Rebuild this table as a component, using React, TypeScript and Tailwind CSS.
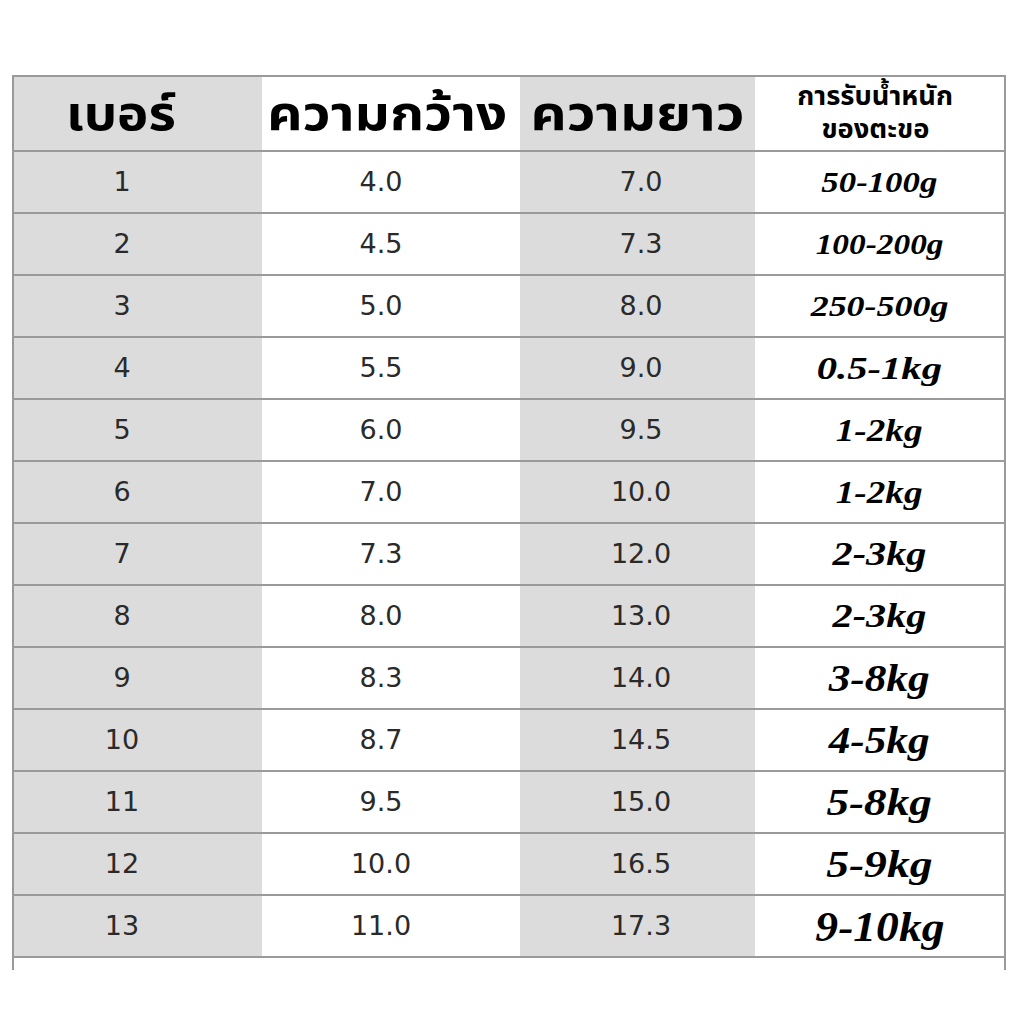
import React from 'react';

// size + horizontal stretch per row, the source face is wider than Times
const rows: { no: string; w: string; l: string; load: string; cls: string }[] = [
  { no: '1', w: '4.0', l: '7.0', load: '50-100g', cls: 'text-[29px] scale-x-[1.2]' },
  { no: '2', w: '4.5', l: '7.3', load: '100-200g', cls: 'text-[29px] scale-x-[1.15]' },
  { no: '3', w: '5.0', l: '8.0', load: '250-500g', cls: 'text-[29px] scale-x-[1.24]' },
  { no: '4', w: '5.5', l: '9.0', load: '0.5-1kg', cls: 'text-[32px] scale-x-[1.27]' },
  { no: '5', w: '6.0', l: '9.5', load: '1-2kg', cls: 'text-[31px] scale-x-[1.2]' },
  { no: '6', w: '7.0', l: '10.0', load: '1-2kg', cls: 'text-[31px] scale-x-[1.2]' },
  { no: '7', w: '7.3', l: '12.0', load: '2-3kg', cls: 'text-[33px] scale-x-[1.22]' },
  { no: '8', w: '8.0', l: '13.0', load: '2-3kg', cls: 'text-[33px] scale-x-[1.22]' },
  { no: '9', w: '8.3', l: '14.0', load: '3-8kg', cls: 'text-[37px] scale-x-[1.17]' },
  { no: '10', w: '8.7', l: '14.5', load: '4-5kg', cls: 'text-[37px] scale-x-[1.17]' },
  { no: '11', w: '9.5', l: '15.0', load: '5-8kg', cls: 'text-[37px] scale-x-[1.22]' },
  { no: '12', w: '10.0', l: '16.5', load: '5-9kg', cls: 'text-[38px] scale-x-[1.2]' },
  { no: '13', w: '11.0', l: '17.3', load: '9-10kg', cls: 'text-[43px] scale-x-[1.06]' },
];

const thai = "font-['Noto_Sans_Thai','Tahoma','Noto_Sans',sans-serif]";
const num = "font-['DejaVu_Sans','Noto_Sans',sans-serif]";
const serif = "font-['Liberation_Serif','DejaVu_Serif',serif]";
const line = 'border-[#9a9a9a]';

export default function App() {
  return (
    <div className="w-[1024px] h-[1024px] bg-white pt-[75px] pl-[12px]">
      <div className={`w-[994px] border-x-2 border-t-2 ${line}`}>
        {/* header */}
        <div className={`grid grid-cols-[248px_258px_235px_1fr] grid-rows-[73px] h-[75px] overflow-hidden border-b-2 ${line}`}>
          <div className={`bg-[#dcdcdc] flex items-center justify-center pr-[34px] pt-[4px] text-[48px] leading-none font-bold text-black ${thai}`}>
            <span className="scale-x-[1.1]">เบอร์</span>
          </div>
          <div className={`bg-white flex items-center justify-center pr-[8px] pt-[4px] text-[48px] leading-none font-bold text-black ${thai}`}>
            <span className="scale-x-[1.14]">ความกว้าง</span>
          </div>
          <div className={`bg-[#dcdcdc] flex items-center justify-center pt-[4px] text-[48px] leading-none font-bold text-black ${thai}`}>
            <span className="scale-x-[1.17]">ความยาว</span>
          </div>
          <div className={`bg-white flex flex-col items-center justify-center pr-[8px] text-[26px] leading-[33px] font-bold text-black ${thai}`}>
            <span className="scale-x-[1.05]">การรับน้ำหนัก</span>
            <span className="scale-x-[1.05]">ของตะขอ</span>
          </div>
        </div>
        {rows.map((r) => (
          <div key={r.no} className={`grid grid-cols-[248px_258px_235px_1fr] grid-rows-[60px] h-[62px] overflow-hidden border-b-2 ${line}`}>
            <div className={`bg-[#dcdcdc] flex items-center justify-center pr-[32px] text-[27px] text-[#2a2a2a] ${num}`}>
              {r.no}
            </div>
            <div className={`bg-white flex items-center justify-center pr-[20px] text-[27px] text-[#2a2a2a] ${num}`}>
              {r.w}
            </div>
            <div className={`bg-[#dcdcdc] flex items-center justify-center pl-[7px] text-[27px] text-[#2a2a2a] ${num}`}>
              {r.l}
            </div>
            <div className="bg-white flex items-center justify-center">
              <span className={`inline-block italic font-bold leading-none text-black ${r.cls} ${serif}`}>{r.load}</span>
            </div>
          </div>
        ))}
        <div className="h-[12px]" />
      </div>
    </div>
  );
}
